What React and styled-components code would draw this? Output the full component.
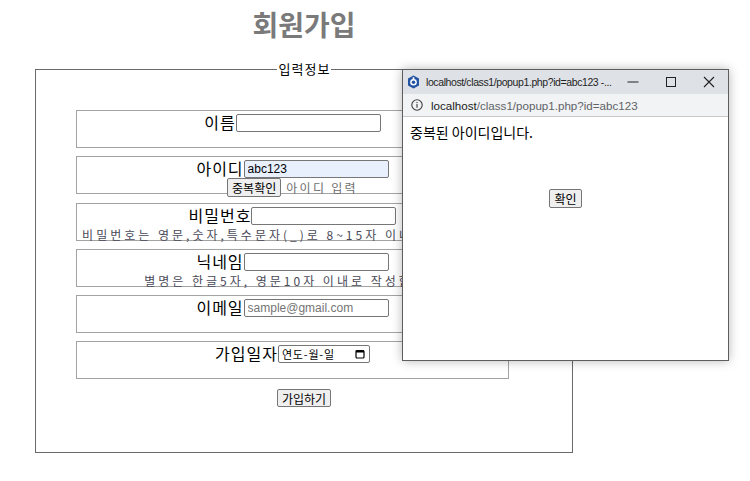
import React from 'react';
import styled, { createGlobalStyle } from 'styled-components';

const KR = `'Noto Sans CJK KR', 'Noto Sans', sans-serif`;
const UI = `'Liberation Sans', Arial, 'Noto Sans CJK KR', sans-serif`;

const GlobalStyle = createGlobalStyle`
  html, body {
    margin: 0;
    padding: 0;
    background: #fff;
  }
  body {
    font-family: ${KR};
    color: #000;
  }
`;

const Page = styled.div`
  position: relative;
  width: 750px;
  height: 481px;
  padding-left: 35px;
  box-sizing: border-box;
  overflow: hidden;
`;

const Title = styled.h1`
  width: 538px;
  height: 61px;
  margin: 0;
  padding-top: 7px;
  box-sizing: border-box;
  text-align: center;
  font-family: ${KR};
  font-size: 28px;
  line-height: 34px;
  font-weight: 700;
  color: #7a7a7a;
`;

const Fieldset = styled.fieldset`
  width: 538px;
  height: 392px;
  box-sizing: border-box;
  margin: 0;
  padding: 33px 0 0 0;
  border: 1px solid #6a6a6a;
  min-inline-size: auto;
`;

const Legend = styled.legend`
  margin: 0 auto;
  padding: 0 1px 0 2px;
  font-family: ${KR};
  font-size: 13px;
  line-height: 16px;
  letter-spacing: 1px;
`;

const Rows = styled.div`
  display: flex;
  flex-direction: column;
  gap: 8.3px;
  padding-left: 40px;
`;

const Row = styled.div`
  width: 433px;
  height: 38px;
  box-sizing: border-box;
  border: 1px solid #a3a3a3;
  text-align: center;
`;

const Line = styled.div`
  display: flex;
  justify-content: center;
  align-items: flex-start;
  height: 21px;
  padding-top: ${p => p.$pad ?? 3}px;
  box-sizing: border-box;
`;

const Label = styled.span`
  font-family: ${KR};
  font-size: 16px;
  line-height: 17px;
  letter-spacing: 1px;
  white-space: nowrap;
`;

const Input = styled.input`
  width: ${p => p.$w || 145}px;
  height: 18px;
  box-sizing: border-box;
  margin: 0;
  padding: 0 3px;
  border: 1px solid #767676;
  border-radius: 2px;
  font-family: ${UI};
  font-size: 12px;
  color: #000;
  background: ${p => (p.$filled ? '#e8f0fe' : '#fff')};
  outline: none;
  &::placeholder {
    color: #757575;
  }
`;

const DateBox = styled.span`
  display: flex;
  align-items: center;
  justify-content: space-between;
  width: 92px;
  height: 18px;
  box-sizing: border-box;
  padding: 0 4px 0 3px;
  border: 1px solid #767676;
  border-radius: 2px;
  font-family: ${KR};
  font-size: 11px;
  line-height: 16px;
  letter-spacing: 0.8px;
`;

const Hint = styled.div`
  padding-top: 3px;
  font-family: ${KR};
  font-size: 12px;
  line-height: 14px;
  letter-spacing: 3px;
  color: #4a4a58;
  white-space: nowrap;
`;

const InlineHint = styled.span`
  margin-left: 5px;
  font-family: ${KR};
  font-size: 12px;
  line-height: 19px;
  letter-spacing: 2.3px;
  color: #6e6e6e;
  white-space: nowrap;
`;

const Button = styled.button`
  height: ${p => p.$h || 19}px;
  margin: 0;
  padding: 0 4px;
  box-sizing: border-box;
  border: 1px solid #767676;
  border-radius: 2px;
  background: #efefef;
  font-family: ${KR};
  font-size: 12px;
  line-height: 15px;
  color: #000;
  cursor: pointer;
`;

const SubmitRow = styled.div`
  display: flex;
  justify-content: center;
  padding-top: 10px;
`;

/* popup window */

const Popup = styled.div`
  position: absolute;
  left: 402px;
  top: 69px;
  width: 327px;
  height: 292px;
  box-sizing: border-box;
  border: 1px solid #5e5e5e;
  background: #fff;
  box-shadow: 0 0 10px rgba(0, 0, 0, 0.28);
  display: flex;
  flex-direction: column;
`;

const TitleBar = styled.div`
  display: flex;
  align-items: center;
  height: 24px;
  background: #dee1e6;
  padding-left: 4px;
`;

const TitleText = styled.span`
  flex: 1;
  min-width: 0;
  margin-left: 6px;
  font-family: ${UI};
  font-size: 10.5px;
  letter-spacing: -0.4px;
  color: #1f1f1f;
  white-space: nowrap;
  overflow: hidden;
`;

const WinButton = styled.span`
  display: flex;
  align-items: center;
  justify-content: center;
  width: 38px;
  height: 24px;
  flex-shrink: 0;
  color: #222;
`;

const AddressBar = styled.div`
  display: flex;
  align-items: center;
  height: 23px;
  box-sizing: border-box;
  padding-left: 8px;
  background: #f1f3f4;
  border-bottom: 1px solid #c9c9c9;
`;

const Url = styled.span`
  margin-left: 8px;
  font-family: ${UI};
  font-size: 11.6px;
  color: #5f6368;
  white-space: nowrap;
`;

const Host = styled.span`
  color: #202124;
`;

const PopupBody = styled.div`
  padding: 5px 7px;
  font-family: ${KR};
  font-size: 14px;
  line-height: 20px;
`;

const PopupActions = styled.div`
  display: flex;
  justify-content: center;
  padding-top: 47px;
`;

function WhaleIcon() {
  return (
    <svg width="13" height="14" viewBox="0 0 13 14">
      <path d="M6.5 0.5 L12 3.6 V10.4 L6.5 13.5 L1 10.4 V3.6 Z" fill="#2455a4" />
      <circle cx="6.5" cy="7.3" r="3.3" fill="#fff" />
      <circle cx="6.5" cy="7.3" r="1.8" fill="#2455a4" />
      <rect x="5.7" y="2.2" width="1.6" height="2.6" fill="#fff" />
    </svg>
  );
}

function InfoIcon() {
  return (
    <svg width="12" height="12" viewBox="0 0 12 12">
      <circle cx="6" cy="6" r="5.2" fill="none" stroke="#3c4043" strokeWidth="1.1" />
      <rect x="5.45" y="5" width="1.1" height="3.8" fill="#3c4043" />
      <rect x="5.45" y="3" width="1.1" height="1.1" fill="#3c4043" />
    </svg>
  );
}

function CalendarIcon() {
  return (
    <svg width="10" height="10" viewBox="0 0 10 10">
      <rect x="1" y="1.5" width="8" height="7.5" rx="1" fill="none" stroke="#000" strokeWidth="1.2" />
      <rect x="1" y="1.5" width="8" height="2" fill="#000" />
    </svg>
  );
}

export default function App() {
  return (
    <>
      <GlobalStyle />
      <Page>
        <Title>회원가입</Title>
        <Fieldset>
          <Legend>입력정보</Legend>
          <Rows>
            <Row>
              <Line>
                <Label>이름</Label>
                <Input type="text" />
              </Line>
            </Row>
            <Row>
              <Line>
                <Label>아이디</Label>
                <Input type="text" defaultValue="abc123" $filled />
              </Line>
              <Line $pad={0}>
                <Button type="button">중복확인</Button>
                <InlineHint>아이디 입력</InlineHint>
              </Line>
            </Row>
            <Row>
              <Line>
                <Label>비밀번호</Label>
                <Input type="password" />
              </Line>
              <Hint>비밀번호는 영문,숫자,특수문자(_)로 8~15자 이내로 입력하세요</Hint>
            </Row>
            <Row>
              <Line>
                <Label>닉네임</Label>
                <Input type="text" />
              </Line>
              <Hint>별명은 한글5자, 영문10자 이내로 작성합니다</Hint>
            </Row>
            <Row>
              <Line>
                <Label>이메일</Label>
                <Input type="email" placeholder="sample@gmail.com" />
              </Line>
            </Row>
            <Row>
              <Line>
                <Label>가입일자</Label>
                <DateBox>
                  연도-월-일
                  <CalendarIcon />
                </DateBox>
              </Line>
            </Row>
          </Rows>
          <SubmitRow>
            <Button type="submit" $h={18}>가입하기</Button>
          </SubmitRow>
        </Fieldset>

        <Popup>
          <TitleBar>
            <WhaleIcon />
            <TitleText>localhost/class1/popup1.php?id=abc123 -...</TitleText>
            <WinButton>
              <svg width="12" height="12" viewBox="0 0 12 12">
                <rect x="0.5" y="5.5" width="11" height="1" fill="#222" />
              </svg>
            </WinButton>
            <WinButton>
              <svg width="12" height="12" viewBox="0 0 12 12">
                <rect x="1.5" y="1.5" width="9" height="9" fill="none" stroke="#222" strokeWidth="1" />
              </svg>
            </WinButton>
            <WinButton>
              <svg width="12" height="12" viewBox="0 0 12 12">
                <path d="M1 1 L11 11 M11 1 L1 11" stroke="#222" strokeWidth="1.1" />
              </svg>
            </WinButton>
          </TitleBar>
          <AddressBar>
            <InfoIcon />
            <Url>
              <Host>localhost</Host>/class1/popup1.php?id=abc123
            </Url>
          </AddressBar>
          <PopupBody>
            중복된 아이디입니다.
            <PopupActions>
              <Button type="button">확인</Button>
            </PopupActions>
          </PopupBody>
        </Popup>
      </Page>
    </>
  );
}
